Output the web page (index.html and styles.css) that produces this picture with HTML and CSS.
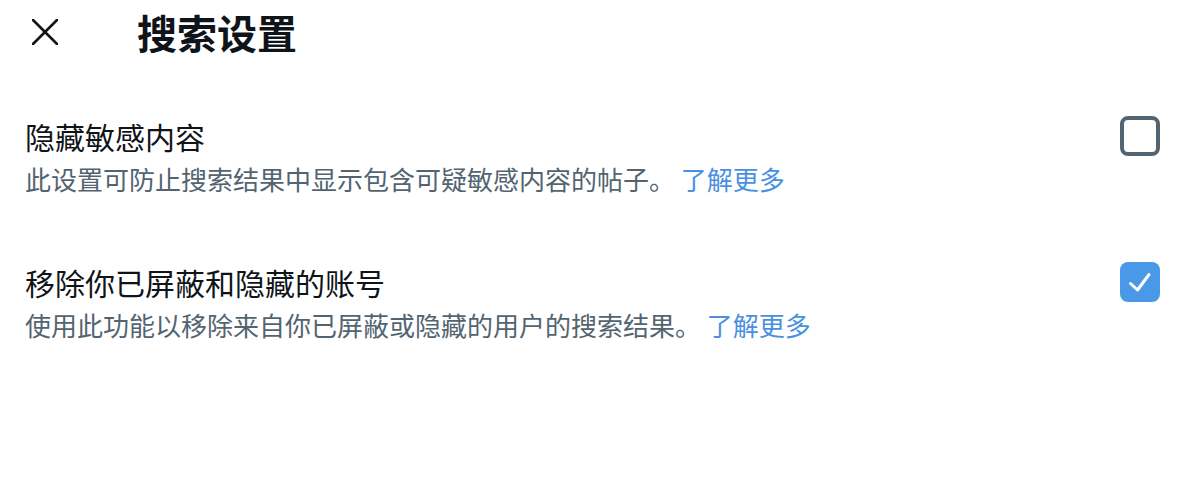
FILE: index.html
```html
<!DOCTYPE html>
<html lang="zh-CN">
<head>
<meta charset="utf-8">
<title>搜索设置</title>
<link rel="stylesheet" href="styles.css">
</head>
<body>
<header class="header">
  <button class="close" aria-label="关闭">
    <svg width="26" height="26" viewBox="0 0 26 26"><path d="M1 1 L25 25 M25 1 L1 25" stroke="#0f1419" stroke-width="2.6" stroke-linecap="round" fill="none"/></svg>
  </button>
  <h1 class="title">搜索设置</h1>
</header>
<main class="list">
  <section class="row">
    <div class="text">
      <div class="row-title">隐藏敏感内容</div>
      <div class="row-sub">此设置可防止搜索结果中显示包含可疑敏感内容的帖子。 <a class="link" href="#">了解更多</a></div>
    </div>
    <span class="box"></span>
  </section>
  <section class="row">
    <div class="text">
      <div class="row-title">移除你已屏蔽和隐藏的账号</div>
      <div class="row-sub">使用此功能以移除来自你已屏蔽或隐藏的用户的搜索结果。 <a class="link" href="#">了解更多</a></div>
    </div>
    <span class="box checked">
      <svg width="40" height="40" viewBox="0 0 40 40"><path d="M10.5 21.5 L17.5 28 L29 12.5" stroke="#fff" stroke-width="3" stroke-linecap="round" stroke-linejoin="round" fill="none"/></svg>
    </span>
  </section>
</main>
</body>
</html>
```
FILE: styles.css
```css
html, body {
  margin: 0;
  padding: 0;
  background: #ffffff;
}
body {
  font-family: "Noto Sans CJK SC", "Noto Sans", sans-serif;
  color: #0f1419;
  width: 1188px;
  height: 478px;
  overflow: hidden;
}
.header {
  display: flex;
  align-items: center;
  height: 64px;
  padding-left: 32px;
}
.close {
  border: 0;
  background: none;
  padding: 0;
  width: 26px;
  height: 26px;
  display: flex;
  cursor: pointer;
}
.title {
  margin: 0 0 0 79px;
  font-size: 40px;
  font-weight: 700;
  line-height: 48px;
}
.list {
  padding: 52px 28px 0 25px;
  display: flex;
  flex-direction: column;
  gap: 60px;
}
.row {
  display: flex;
  align-items: flex-start;
  justify-content: space-between;
}
.row-title {
  font-size: 30px;
  line-height: 40px;
}
.row-sub {
  font-size: 26px;
  line-height: 46px;
  color: #536471;
}
.link {
  color: #4a90e2;
  text-decoration: none;
}
.box {
  box-sizing: border-box;
  width: 40px;
  height: 40px;
  border: 4px solid #536471;
  border-radius: 8px;
  flex: none;
  display: flex;
  align-items: center;
  justify-content: center;
}
.box.checked {
  border: 0;
  background: #4a99e9;
}
```
